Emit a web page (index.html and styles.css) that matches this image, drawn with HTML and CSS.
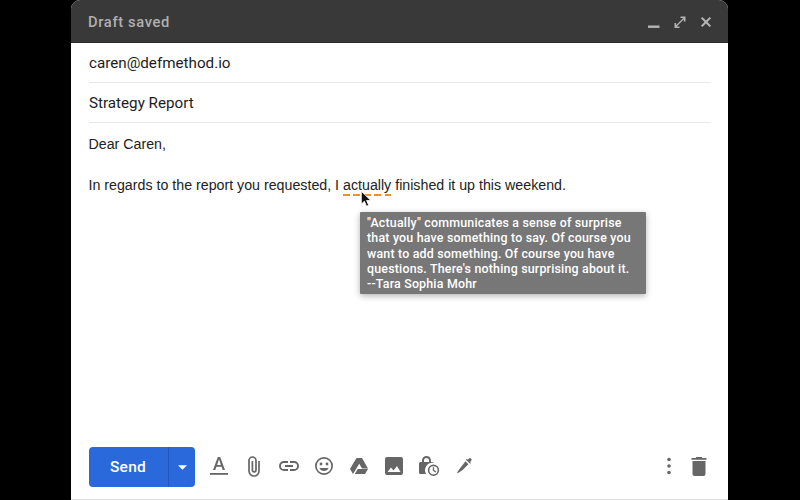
FILE: index.html
```html
<!DOCTYPE html>
<html lang="en">
<head>
<meta charset="utf-8">
<title>Draft saved</title>
<link rel="stylesheet" href="styles.css">
</head>
<body>
<main class="compose">
  <header class="titlebar">
    <span class="title">Draft saved</span>
    <div class="window-actions">
      <svg class="win-icon" viewBox="0 0 14 14"><rect x="1" y="10.500" width="11.500" height="2.400"/></svg>
      <svg class="win-icon" viewBox="0 0 14 14"><path d="M7.500 1.500h5v5h-1.600V4.200L3.700 11.400h2.800V13H1.500V8h1.600v2.300l7.200-7.200H7.500z"/></svg>
      <svg class="win-icon" viewBox="0 0 14 14"><path d="M3.300 1.900 7 5.600l3.700-3.700 1.400 1.400L8.400 7l3.700 3.700-1.400 1.400L7 8.400l-3.700 3.700-1.400-1.400L5.600 7 1.900 3.300z"/></svg>
    </div>
  </header>
  <div class="fields">
    <div class="field field-to">caren@defmethod.io</div>
    <div class="field">Strategy Report</div>
  </div>
  <div class="message">
    <p class="line">Dear Caren,</p>
    <p class="line">In regards to the report you requested, I <span class="flagged">actually<svg class="cursor" viewBox="0 0 14 20"><path d="M1.500 1v15l3.600-3.400 2.500 5.900 2.600-1.100-2.500-5.700h5z" stroke="#fff" stroke-width="1"/></svg><span class="tip">"Actually" communicates a sense of surprise that you have something to say. Of course you want to add something. Of course you have questions. There's nothing surprising about it.<br>--Tara Sophia Mohr</span></span> finished it up this weekend.</p>
  </div>
  <footer class="toolbar">
    <div class="send">
      <span class="send-label">Send</span>
      <span class="send-more"><svg class="caret" viewBox="0 0 10 5"><path d="M0 0h10L5 5z"/></svg></span>
    </div>
    <div class="tools">
      <svg class="tool" viewBox="0 0 24 24"><path d="M3 19h18v1.800H3z"/><path d="M10.800 3 6 16h2.300l1.100-3.200h5.200l1.100 3.200H18L13.200 3zm-.7 8L12 5.300l1.900 5.700z"/></svg>
      <svg class="tool" viewBox="0 0 24 24"><path class="line-icon" d="M17 7v10a5 5 0 0 1-10 0V6.500a3.500 3.500 0 0 1 7 0V16a1.800 1.800 0 0 1-3.600 0V7"/></svg>
      <svg class="tool" viewBox="0 0 24 24"><path d="M3.900 12A3.100 3.100 0 0 1 7 8.900h4V7H7a5 5 0 0 0 0 10h4v-1.900H7A3.100 3.100 0 0 1 3.900 12zM8 13h8v-2H8zm9-6h-4v1.900h4a3.100 3.100 0 0 1 0 6.200h-4V17h4a5 5 0 0 0 0-10z"/></svg>
      <svg class="tool" viewBox="0 0 24 24"><path d="M12 3a9 9 0 1 0 0 18 9 9 0 0 0 0-18zm0 16.300a7.300 7.300 0 1 1 0-14.600 7.300 7.300 0 0 1 0 14.600z" fill-rule="evenodd"/><circle cx="15" cy="10" r="1.400"/><circle cx="9" cy="10" r="1.400"/><path d="M12 17c2.100 0 3.900-1.200 4.600-3H7.400c.7 1.800 2.500 3 4.600 3z"/></svg>
      <svg class="tool" viewBox="0 0 24 24"><path d="M9 4h6l6 10.500h-6zM3 15l3-5.300L9.500 4l3 5.300L6 20zM7.800 20l3-5h10.200l-3 5z"/></svg>
      <svg class="tool" viewBox="0 0 24 24"><path d="M21 19V5a2 2 0 0 0-2-2H5a2 2 0 0 0-2 2v14a2 2 0 0 0 2 2h14a2 2 0 0 0 2-2zM5.500 18l3.500-4.500 2.500 3 3.500-4.500 3.500 6z" fill-rule="evenodd"/></svg>
      <svg class="tool" viewBox="0 0 24 24"><path d="M16.500 22a5.700 5.700 0 1 0 0-11.400 5.700 5.700 0 0 0 0 11.400zm0-1.600a4.100 4.100 0 1 1 0-8.200 4.100 4.100 0 0 1 0 8.200z" fill-rule="evenodd"/><path d="M15.800 13.300v3.500l2.900 1.700.7-1.100-2.300-1.300v-2.800z"/><path d="M3.500 20A1.500 1.500 0 0 1 2 18.500v-9A1.500 1.500 0 0 1 3.500 8H5V6.500a4.500 4.500 0 0 1 9 0V8h1.500c.6 0 1 .3 1.300.8a7.500 7.500 0 0 0-7.700 11.200zM7 8h5V6.500a2.500 2.500 0 0 0-5 0z" fill-rule="evenodd"/></svg>
      <svg class="tool" viewBox="0 0 24 24"><g transform="translate(2.500 2) scale(.82)"><path d="M7 14.500 4 19l-1 2 2-.5 4.500-3 7.500-7.500-3.500-3.500zM15.500 6l3.500 3.500 1-1-1-1.300 1.600-1.600c.5-.5.5-1.300 0-1.800l-.9-.9c-.5-.5-1.300-.5-1.800 0l-1.600 1.600-1.300-1-1 1z"/></g></svg>
    </div>
    <div class="end-tools">
      <svg class="tool" viewBox="0 0 24 24"><circle cx="12" cy="5.500" r="1.800"/><circle cx="12" cy="12" r="1.800"/><circle cx="12" cy="18.500" r="1.800"/></svg>
      <svg class="tool" viewBox="0 0 24 24"><path d="M15 4V3H9v1H4.500v1.800h15V4zM5.500 7v13a2 2 0 0 0 2 2h9a2 2 0 0 0 2-2V7z"/></svg>
    </div>
  </footer>
</main>
</body>
</html>
```
FILE: styles.css
```css
html, body {
  margin: 0;
  height: 100%;
  background: #000;
  overflow: hidden;
}
body {
  display: flex;
  padding-left: 71px;
  box-sizing: border-box;
}
.compose {
  width: 657px;
  height: 500px;
  box-sizing: border-box;
  background: #fff;
  border-top-left-radius: 9px;
  border-top-right-radius: 9px;
  border-bottom: 1px solid #dedede;
  display: flex;
  flex-direction: column;
  overflow: hidden;
  color: #222;
}
.titlebar {
  height: 43px;
  flex: none;
  background: #393939;
  border-bottom: 1px solid #2a2a2a;
  box-sizing: border-box;
  display: flex;
  align-items: center;
  justify-content: space-between;
  padding: 1px 15px 0 17px;
}
.title {
  font: 500 14.700px/20px "Roboto", sans-serif;
  letter-spacing: .65px;
  color: #b0b0b0;
  padding-top: 1px;
}
.window-actions {
  display: flex;
  gap: 12px;
}
.win-icon {
  width: 14px;
  height: 14px;
  fill: #b5b5b5;
}
.fields {
  padding: 0 18px;
}
.field {
  height: 40px;
  box-sizing: border-box;
  border-bottom: 1px solid #e8e8e8;
  font: 400 15.200px/40px "Roboto", sans-serif;
  color: #1c1c1c;
}
.field-to {
  line-height: 41px;
}
.message {
  flex: 1;
  padding: 10.500px 18px 0 17.500px;
  font: 14.230px/20.500px "Liberation Sans", sans-serif;
  color: #222;
}
.line {
  margin: 0 0 21px;
}
.flagged {
  position: relative;
}
.flagged::after {
  content: "";
  position: absolute;
  left: 0;
  right: 0;
  top: 17px;
  height: 2px;
  background: repeating-linear-gradient(90deg, #e8912d 0 7px, transparent 7px 10.500px);
}
.cursor {
  position: absolute;
  left: 17px;
  top: 13px;
  width: 12px;
  height: 18px;
  fill: #111;
  z-index: 1;
}
.tip {
  position: absolute;
  left: 17px;
  top: 35px;
  width: 272px;
  padding: 3px 7px 3px;
  background: #777;
  color: #fff;
  font: 500 12.400px/15.250px "Roboto", sans-serif;
  letter-spacing: .2px;
  box-shadow: 0 2px 6px rgba(0,0,0,.3);
  border-radius: 1px;
}
.toolbar {
  flex: none;
  height: 52px;
  display: flex;
  align-items: flex-start;
  padding: 0 18px;
}
.send {
  display: flex;
  height: 40px;
  width: 106px;
  border-radius: 4px;
  background: #2a69dc;
  color: #fff;
  overflow: hidden;
}
.send-label {
  flex: 1;
  text-align: center;
  font: 500 15.500px/40px "Roboto", sans-serif;
  letter-spacing: .3px;
  padding-right: 1px;
}
.send-more {
  width: 26px;
  border-left: 1px solid #2257bb;
  display: flex;
  align-items: center;
  justify-content: center;
}
.caret {
  width: 9px;
  height: 5px;
  fill: #fff;
}
.tools {
  display: flex;
  gap: 11px;
  margin-left: 12px;
  margin-top: 7px;
}
.end-tools {
  display: flex;
  gap: 6px;
  margin-left: auto;
  margin-top: 7px;
  margin-right: -1px;
}
.tool {
  width: 24px;
  height: 24px;
  fill: #666;
}
.line-icon {
  fill: none;
  stroke: #666;
  stroke-width: 1.700px;
}
```
